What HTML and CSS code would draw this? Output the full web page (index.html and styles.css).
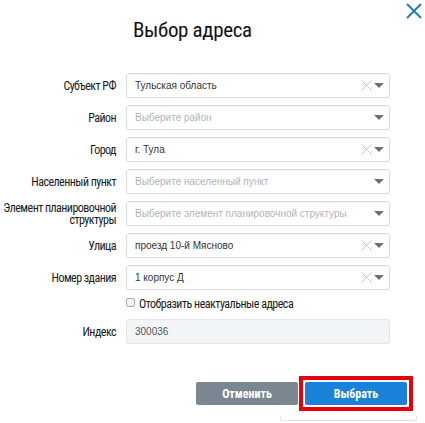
FILE: index.html
```html
<!DOCTYPE html>
<html lang="ru">
<head>
<meta charset="utf-8">
<title>Выбор адреса</title>
<link rel="stylesheet" href="styles.css">
</head>
<body>
<div class="dialog">
  <header class="head">
    <h1 class="title">Выбор адреса</h1>
    <button class="close" type="button" aria-label="Закрыть">
      <svg width="16" height="16" viewBox="0 0 16 16"><path d="M1 1L15 15M15 1L1 15" stroke="#2a7bb4" stroke-width="2" fill="none"/></svg>
    </button>
  </header>

  <form class="form">
    <label class="lbl">Субъект РФ</label>
    <div class="select"><span class="value">Тульская область</span><svg class="clear" viewBox="0 0 11 11"><path d="M0.5 0.5L10.5 10.5M10.5 0.5L0.5 10.5" stroke="#c3c8ce" stroke-width="1" fill="none"/></svg><span class="caret"></span></div>

    <label class="lbl">Район</label>
    <div class="select"><span class="value placeholder">Выберите район</span><span class="caret"></span></div>

    <label class="lbl">Город</label>
    <div class="select"><span class="value">г. Тула</span><svg class="clear" viewBox="0 0 11 11"><path d="M0.5 0.5L10.5 10.5M10.5 0.5L0.5 10.5" stroke="#c3c8ce" stroke-width="1" fill="none"/></svg><span class="caret"></span></div>

    <label class="lbl">Населенный пункт</label>
    <div class="select"><span class="value placeholder">Выберите населенный пункт</span><span class="caret"></span></div>

    <label class="lbl">Элемент планировочной структуры</label>
    <div class="select"><span class="value placeholder">Выберите элемент планировочной структуры</span><span class="caret"></span></div>

    <label class="lbl">Улица</label>
    <div class="select"><span class="value">проезд 10-й Мясново</span><svg class="clear" viewBox="0 0 11 11"><path d="M0.5 0.5L10.5 10.5M10.5 0.5L0.5 10.5" stroke="#c3c8ce" stroke-width="1" fill="none"/></svg><span class="caret"></span></div>

    <label class="lbl">Номер здания</label>
    <div class="select"><span class="value">1 корпус Д</span><svg class="clear" viewBox="0 0 11 11"><path d="M0.5 0.5L10.5 10.5M10.5 0.5L0.5 10.5" stroke="#c3c8ce" stroke-width="1" fill="none"/></svg><span class="caret"></span></div>

    <label class="check"><span class="box"></span>Отобразить неактуальные адреса</label>

    <label class="lbl">Индекс</label>
    <div class="field">300036</div>
  </form>

  <div class="actions">
    <button class="btn btn-cancel" type="button">Отменить</button>
    <div class="focus-ring"><button class="btn btn-ok" type="button">Выбрать</button></div>
  </div>
  <div class="edge"></div>
</div>
</body>
</html>
```

FILE: styles.css
```css
body {
  margin: 0;
  background: #fff;
  font-family: Roboto, "Liberation Sans", sans-serif;
  font-stretch: condensed;
  color: #1a1a1a;
}

/* header: title and close button */
.head {
  display: flex;
  align-items: flex-start;
  height: 42px;
}
.title {
  margin: 18px 0 0 133px;
  font-size: 21px;
  font-weight: 400;
  line-height: 24px;
  letter-spacing: -0.35px;
  color: #111;
}
.close {
  margin: 3px 3px 0 auto;
  width: 16px;
  height: 16px;
  padding: 0;
  border: 0;
  background: none;
  display: block;
}
.close svg { display: block; }

/* address form grid */
.form {
  display: grid;
  grid-template-columns: 116px 264px;
  column-gap: 10px;
  row-gap: 7px;
  margin-top: 31px;
  align-items: center;
}
.lbl {
  text-align: right;
  font-size: 12px;
  line-height: 12px;
  letter-spacing: -0.55px;
  color: #1a1a1a;
}
.select {
  display: flex;
  align-items: center;
  height: 25px;
  box-sizing: border-box;
  border: 1px solid #dcdcdc;
  border-radius: 3px;
  padding: 0 5px 0 8px;
  box-shadow: inset 0 1px 1px rgba(0, 0, 0, 0.06);
  font-family: "Liberation Sans", Arial, sans-serif;
  font-stretch: normal;
  font-size: 10px;
  color: #333;
}
.value { flex: 1; white-space: nowrap; }
.placeholder { color: #b0b4b9; }
.clear {
  width: 11px;
  height: 11px;
  margin-right: 2px;
}
.caret {
  width: 0;
  height: 0;
  border-left: 5px solid transparent;
  border-right: 5px solid transparent;
  border-top: 5px solid #6e6e6e;
}

.check {
  grid-column: 2;
  display: flex;
  align-items: flex-start;
  gap: 4px;
  height: 15px;
  font-size: 12px;
  line-height: 15px;
  letter-spacing: -0.5px;
  color: #1a1a1a;
}
.box {
  width: 9px;
  height: 9px;
  margin-top: 1px;
  box-sizing: border-box;
  border: 1px solid #a9a9a9;
  border-radius: 2px;
  background: #f4f4f4;
}

.field {
  display: flex;
  align-items: center;
  height: 25px;
  box-sizing: border-box;
  border: 1px solid #e1e5ea;
  border-radius: 3px;
  background: #f2f5f8;
  padding-left: 8px;
  font-family: "Liberation Sans", Arial, sans-serif;
  font-stretch: normal;
  font-size: 10px;
  color: #555;
}

/* footer buttons */
.actions {
  display: flex;
  justify-content: flex-end;
  align-items: center;
  gap: 1px;
  margin-top: 32px;
  padding-right: 12px;
}
.btn {
  width: 102px;
  height: 23px;
  padding: 0;
  border: 0;
  border-radius: 2px;
  color: #fff;
  font-family: Roboto, "Liberation Sans", sans-serif;
  font-stretch: condensed;
  font-weight: 700;
  font-size: 12px;
}
.btn-cancel { background: #7a8791; }
.btn-ok { background: #1a82d8; display: block; }
.focus-ring {
  border: 4px solid #e8000b;
  padding: 2px;
}

.edge {
  margin: 5px 0 0 280px;
  width: 135px;
  height: 4px;
  border: 1px solid #e2e2e2;
  border-top: 0;
  border-radius: 0 0 3px 3px;
}
```
